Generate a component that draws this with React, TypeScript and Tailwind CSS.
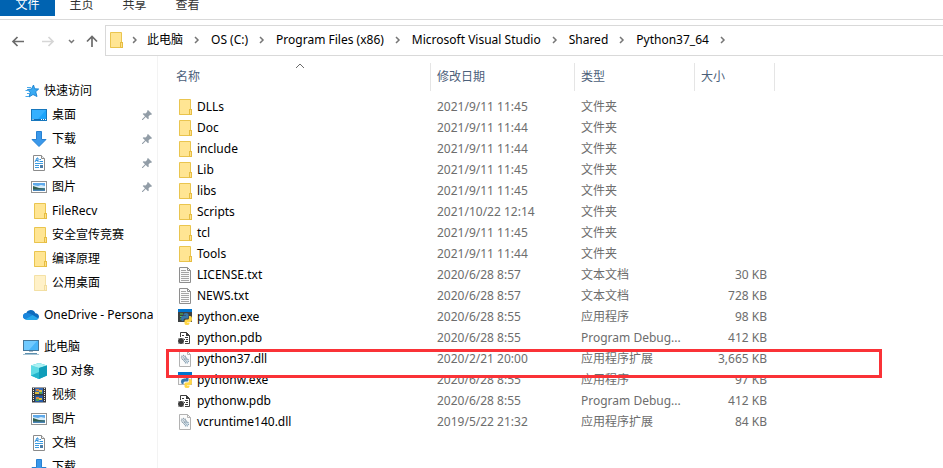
import { Fragment, type ReactNode } from "react";

type IconProps = { className?: string };

const FolderIcon = ({ className = "" }: IconProps) => (
  <svg width="16" height="16" viewBox="0 0 16 16" className={`shrink-0 ${className}`}>
    <path d="M3.5.5h11v10.500M3.500.5v15h12V11.500" fill="#ffe79b" stroke="#eac54f" />
    <path d="M4 1h10v10l-1 1v3H4z" fill="#ffe593" />
    <rect x="13.500" y="10.500" width="2" height="5" fill="#ffe08a" stroke="#e6bd42" />
    <path d="M3.500 15.500h10" stroke="#e9c34c" />
  </svg>
);

const StarIcon = () => (
  <svg width="16" height="16" viewBox="0 0 16 16" className="shrink-0">
    <path d="M10.500 2l1.200 3.800 4 .2-3 2.700L14 13.500l-4-2-4 2.500 1.200-4.500L4.500 6.500l4-.5z" fill="#3aaaf2" stroke="#1580d0" strokeWidth=".9" />
    <path d="M4 4.500h4M2.500 7.500h4M4 10.500h3M2.500 13.500h3.500" stroke="#4aa9ea" />
  </svg>
);

const DesktopIcon = () => (
  <svg width="16" height="16" viewBox="0 0 16 16" className="shrink-0">
    <rect x=".5" y="2.500" width="15" height="11" fill="#1ca4fb" stroke="#1777bd" />
    <path d="M1 3h14L7 12H1z" fill="#35b0ff" />
    <path d="M1 12.500h14" stroke="#0b6cb8" />
    <path d="M1.500 12.500h1M10 12.500h1M12 12.500h1M14 12.500h1" stroke="#fff" />
  </svg>
);

const DownloadIcon = () => (
  <svg width="16" height="16" viewBox="0 0 16 16" className="shrink-0">
    <path d="M5.500.5h5v8h4.500L8 15.500 1 8.500h4.500z" fill="#3a98ea" stroke="#2781d2" />
  </svg>
);

const DocumentIcon = () => (
  <svg width="16" height="16" viewBox="0 0 16 16" className="shrink-0">
    <path d="M2.500.5h8l3 3v12h-11z" fill="#fff" stroke="#8b8b8b" />
    <path d="M10.500.5v3h3" fill="#eee" stroke="#8b8b8b" />
    <path d="M4 7l2-4h1v4M5 5.500h2M8.500 4.500h1.500M8.500 6.500h3.500" fill="none" stroke="#2b8fdc" />
    <path d="M4 8.500h8M4 10.500h4M4 12.500h4" stroke="#3f9de0" />
    <path d="M9 10h3v3H9z" fill="#4d7ea8" />
  </svg>
);

const PictureIcon = () => (
  <svg width="16" height="16" viewBox="0 0 16 16" className="shrink-0">
    <rect x=".5" y="2.500" width="15" height="11" fill="#fff" stroke="#929292" />
    <rect x="2" y="4" width="12" height="8" fill="#5ea9ea" />
    <path d="M2 6l5 1 3-1 4 1v2H2z" fill="#d7ecf9" />
    <path d="M2 7l3 1 3 1 6 .500V11H2z" fill="#35604f" />
    <path d="M2 10.500h12V12H2z" fill="#4b86b8" />
  </svg>
);

const CloudIcon = () => (
  <svg width="16" height="16" viewBox="0 0 16 16" className="shrink-0">
    <path d="M4 12.500C1.500 12.500 0 11 0 9.200 0 7.300 1.500 6 3.300 6 4.200 3.800 6 3 7.800 3c2.400 0 4 1.500 4.500 3.300C14.500 6.300 16 7.700 16 9.600c0 1.800-1.300 3.400-3.500 3.400z" fill="#0f6cbd" />
    <path d="M3.300 6C1.500 6 0 7.300 0 9.200c0 1.300.7 2.400 2 3L9.500 8 6.800 6.500C5.700 5.900 4.300 5.800 3.300 6z" fill="#1a86dc" />
    <path d="M2 12.200L9.500 8l6 3.600c-.6.900-1.600 1.400-3 1.400H4.200c-.8 0-1.500-.2-2.200-.8z" fill="#28a8ea" />
  </svg>
);

const ComputerIcon = () => (
  <svg width="16" height="16" viewBox="0 0 16 16" className="shrink-0">
    <rect x=".5" y="1.500" width="15" height="10" fill="#48b5f8" stroke="#45789b" />
    <path d="M1 2h13L6 11H1z" fill="#70caff" />
    <path d="M6 12.500h4" stroke="#a8bdca" />
    <path d="M2 14.500h12" stroke="#5c8fae" />
    <path d="M0 15.500h16" stroke="#a6c3d4" />
  </svg>
);

const CubeIcon = () => (
  <svg width="16" height="16" viewBox="0 0 16 16" className="shrink-0">
    <path d="M8 0l8 2.500v10L8 16l-8-3.500v-10z" fill="#1ab3c9" />
    <path d="M0 2.500L8 5v11l-8-3.500z" fill="#5fdbe5" />
    <path d="M0 2.500L8 0l8 2.500L8 5z" fill="#aaf1f3" />
    <path d="M8 5l8-2.500v10L8 16z" fill="#109db9" />
    <path d="M0 12.500l8-3.500v7z" fill="#23b5cc" />
  </svg>
);

const VideoIcon = () => (
  <svg width="16" height="16" viewBox="0 0 16 16" className="shrink-0">
    <path d="M1 .5h14v15H1z" fill="#38383a" />
    <path d="M2.500 1v14M13.500 1v14" stroke="#e8e8e8" strokeDasharray="1 1" />
    <rect x="4" y="1" width="8" height="6" fill="#366bb5" />
    <rect x="4" y="8.500" width="8" height="6.500" fill="#2459a7" />
    <path d="M5 2h3v2H5zM5 10h3v2H5z" fill="#d9833f" />
    <path d="M8 3h3v2H8zM4 5h4v2H4zM8 11h3v2H8z" fill="#dbbe42" />
    <path d="M9 5h2v2H9zM5 12h3v2H5z" fill="#4fa253" />
  </svg>
);

const TextFileIcon = () => (
  <svg width="16" height="16" viewBox="0 0 16 16" className="shrink-0">
    <path d="M3.500.5h8l3 3v12h-11z" fill="#fafafa" stroke="#8e8e8e" />
    <path d="M11.500.5v3h3" fill="none" stroke="#8e8e8e" />
    <path d="M5 3.500h5M5 5.500h8M5 7.500h8M5 9.500h8M5 11.500h8M5 13.500h8" stroke="#a5a5a5" />
  </svg>
);

const PythonMark = () => (
  <>
    <path d="M7.500 5.500q0-1.500 2.500-1.500t2.500 1.500V8q0 1.500-1.500 1.500H9q-1.500 0-1.500 1.500v1H6.500Q5 12 5 9.500T6.500 7h3.500v-.5H7.500z" fill="#3777ab" />
    <path d="M13 7h1.200Q16 7 16 10t-1.800 3H11v.5h2.500v1Q13.500 16 11 16t-2.500-1.500V12q0-1.500 1.500-1.500h1.500Q13 10.500 13 9z" fill="#ffd748" />
  </>
);

const PythonExeIcon = () => (
  <svg width="16" height="16" viewBox="0 0 16 16" className="shrink-0">
    <rect x="2" y="1" width="14" height="12" fill="#3c4142" />
    <rect x="2" y="0" width="14" height="3" fill="#0074ce" />
    <path d="M4 5h3M4 7.500h2M4 10h1" stroke="#52c65a" />
    <PythonMark />
  </svg>
);

const PythonwExeIcon = () => (
  <svg width="16" height="16" viewBox="0 0 16 16" className="shrink-0">
    <rect x="2.500" y=".5" width="13" height="12" fill="#f5f5f5" stroke="#b4b4b4" />
    <rect x="2" y="0" width="14" height="3" fill="#0074ce" />
    <PythonMark />
  </svg>
);

const PdbIcon = () => (
  <svg width="16" height="16" viewBox="0 0 16 16" className="shrink-0">
    <path d="M4.500 7V2.500h6l3 3v8H9" fill="#fff" stroke="#3d3d3d" />
    <path d="M10 2v4h4z" fill="#3d3d3d" />
    <path d="M6 5.500h2M9 7.500h3M8 9.500h1M10 9.500h2M9 11.500h3" stroke="#3d3d3d" />
    <circle cx="5" cy="11" r="2.900" fill="#3d3d3d" />
    <path d="M2.500 8.500l5 5M7.500 8.500l-5 5M2 11h6" stroke="#3d3d3d" strokeWidth=".8" />
  </svg>
);

const DllIcon = () => (
  <svg width="16" height="16" viewBox="0 0 16 16" className="shrink-0">
    <path d="M3.500.5h8l3 3v12h-11z" fill="#fbfbfb" stroke="#b2b2b2" />
    <path d="M11.500.5v3h3" fill="none" stroke="#b2b2b2" />
    <circle cx="7.500" cy="6.500" r="2" fill="#e5edf2" stroke="#8b9ba7" strokeDasharray="1 .6" strokeWidth="1.300" />
    <circle cx="10.500" cy="10" r="2" fill="#dceaf3" stroke="#8ba5b8" strokeDasharray="1 .6" strokeWidth="1.300" />
    <path d="M7 6l4 5M6 8l4 4M9 5l3 4" stroke="#95a6b2" strokeWidth=".8" />
  </svg>
);

const PinIcon = () => (
  <svg width="10" height="10" viewBox="0 0 10 10" className="mr-[3px] shrink-0">
    <path d="M6 0l4 4-1 1-.800-.300L6.500 6.500l.3 2L6 9.300 3.700 7 .8 10H0v-.8l3-2.900L.7 4l.8-.8 2 .3 1.800-1.700L5 1z" fill="#929da7" />
  </svg>
);

const Crumb = ({ className = "w-7" }: IconProps) => (
  <svg height="10" viewBox="0 0 25 10" className={`shrink-0 ${className}`}>
    <path d="M10.500 2l3 3-3 3" fill="none" stroke="#767676" strokeWidth="1.500" />
  </svg>
);

const TABS = ["主页", "共享", "查看"];

const PATH = ["此电脑", "OS (C:)", "Program Files (x86)", "Microsoft Visual Studio", "Shared", "Python37_64"];

type NavItem = { label: string; icon: ReactNode; pinned?: boolean };

const QUICK_ACCESS: NavItem[] = [
  { label: "桌面", icon: <DesktopIcon />, pinned: true },
  { label: "下载", icon: <DownloadIcon />, pinned: true },
  { label: "文档", icon: <DocumentIcon />, pinned: true },
  { label: "图片", icon: <PictureIcon />, pinned: true },
  { label: "FileRecv", icon: <FolderIcon /> },
  { label: "安全宣传竞赛", icon: <FolderIcon /> },
  { label: "编译原理", icon: <FolderIcon /> },
  { label: "公用桌面", icon: <FolderIcon className="opacity-50" /> },
];

const THIS_PC: NavItem[] = [
  { label: "3D 对象", icon: <CubeIcon /> },
  { label: "视频", icon: <VideoIcon /> },
  { label: "图片", icon: <PictureIcon /> },
  { label: "文档", icon: <DocumentIcon /> },
  { label: "下载", icon: <DownloadIcon /> },
];

const TYPES = {
  folder: { label: "文件夹", icon: FolderIcon },
  txt: { label: "文本文档", icon: TextFileIcon },
  exe: { label: "应用程序", icon: PythonExeIcon },
  wexe: { label: "应用程序", icon: PythonwExeIcon },
  pdb: { label: "Program Debug...", icon: PdbIcon },
  dll: { label: "应用程序扩展", icon: DllIcon },
};

type FileRow = { name: string; date: string; type: keyof typeof TYPES; size?: string; marked?: boolean };

const FILES: FileRow[] = [
  { name: "DLLs", date: "2021/9/11 11:45", type: "folder" },
  { name: "Doc", date: "2021/9/11 11:44", type: "folder" },
  { name: "include", date: "2021/9/11 11:44", type: "folder" },
  { name: "Lib", date: "2021/9/11 11:45", type: "folder" },
  { name: "libs", date: "2021/9/11 11:45", type: "folder" },
  { name: "Scripts", date: "2021/10/22 12:14", type: "folder" },
  { name: "tcl", date: "2021/9/11 11:45", type: "folder" },
  { name: "Tools", date: "2021/9/11 11:44", type: "folder" },
  { name: "LICENSE.txt", date: "2020/6/28 8:57", type: "txt", size: "30 KB" },
  { name: "NEWS.txt", date: "2020/6/28 8:57", type: "txt", size: "728 KB" },
  { name: "python.exe", date: "2020/6/28 8:55", type: "exe", size: "98 KB" },
  { name: "python.pdb", date: "2020/6/28 8:55", type: "pdb", size: "412 KB" },
  { name: "python37.dll", date: "2020/2/21 20:00", type: "dll", size: "3,665 KB", marked: true },
  { name: "pythonw.exe", date: "2020/6/28 8:55", type: "wexe", size: "97 KB" },
  { name: "pythonw.pdb", date: "2020/6/28 8:55", type: "pdb", size: "412 KB" },
  { name: "vcruntime140.dll", date: "2019/5/22 21:32", type: "dll", size: "84 KB" },
];

function NavRow({ item, indent = "pl-[31px]" }: { item: NavItem; indent?: string }) {
  return (
    <a href="#" className={`flex h-6 items-center gap-[5px] pr-[2px] ${indent}`}>
      {item.icon}
      <span className="flex-1 overflow-hidden whitespace-nowrap">{item.label}</span>
      {item.pinned && <PinIcon />}
    </a>
  );
}

function AddressBar() {
  return (
    <div className="flex h-9 items-center pl-[10px] pt-[5px]">
      <button aria-label="返回" className="mr-[14px]">
        <svg width="16" height="16" viewBox="0 0 16 16">
          <path d="M14 8.500H3M7.500 4L3 8.500 7.500 13" fill="none" stroke="#6b6b6b" strokeWidth="1.700" />
        </svg>
      </button>
      <button aria-label="前进" className="mr-2">
        <svg width="16" height="16" viewBox="0 0 16 16">
          <path d="M2 8.500h11M8.500 4L13 8.500 8.500 13" fill="none" stroke="#d6d6d6" strokeWidth="1.700" />
        </svg>
      </button>
      <button aria-label="最近浏览的位置" className="mr-1">
        <svg width="16" height="16" viewBox="0 0 16 16">
          <path d="M5 7l2.500 2.500L10 7" fill="none" stroke="#767676" strokeWidth="1.500" />
        </svg>
      </button>
      <button aria-label="上移" className="mr-[5px]">
        <svg width="16" height="16" viewBox="0 0 16 16">
          <path d="M8 14V3.500M3 8.500l5-5 5 5" fill="none" stroke="#6b6b6b" strokeWidth="1.700" />
        </svg>
      </button>
      <nav className="flex h-[31px] flex-1 items-center overflow-hidden border border-r-0 border-[#d9d9d9] pb-[2px] pl-px">
        <FolderIcon />
        <Crumb className="w-6" />
        {PATH.map((part) => (
          <Fragment key={part}>
            <a href="#" className="whitespace-nowrap">{part}</a>
            <Crumb />
          </Fragment>
        ))}
      </nav>
    </div>
  );
}

function Sidebar() {
  return (
    <aside className="w-[158px] shrink-0 border-r border-[#f3f3f3] pt-[23px]">
      <NavRow item={{ label: "快速访问", icon: <StarIcon /> }} indent="pl-[23px]" />
      {QUICK_ACCESS.map((item) => (
        <NavRow key={item.label} item={item} />
      ))}
      <div className="py-2">
        <NavRow item={{ label: "OneDrive - Persona", icon: <CloudIcon /> }} indent="pl-[23px]" />
      </div>
      <NavRow item={{ label: "此电脑", icon: <ComputerIcon /> }} indent="pl-[23px]" />
      {THIS_PC.map((item) => (
        <NavRow key={item.label} item={item} />
      ))}
    </aside>
  );
}

function FileTable() {
  return (
    <main className="flex-1 pl-3 pt-[7px]">
      <table className="w-[605px] table-fixed border-separate border-spacing-0 text-left text-[#6d6d6d]">
        <thead>
          <tr className="h-7 text-[#4c607a]">
            <th className="relative w-[261px] border-r border-[#e5e5e5] p-0 pl-[6px] font-normal">
              <button>名称</button>
              <svg width="10" height="6" viewBox="0 0 10 6" className="absolute left-1/2 top-0 -translate-x-1/2">
                <path d="M1 5l4-4 4 4" fill="none" stroke="#6b6b6b" />
              </svg>
            </th>
            <th className="w-[144px] border-r border-[#e5e5e5] p-0 pl-[6px] font-normal"><button>修改日期</button></th>
            <th className="w-[120px] border-r border-[#e5e5e5] p-0 pl-[6px] font-normal"><button>类型</button></th>
            <th className="w-[80px] border-r border-[#e5e5e5] p-0 pl-[6px] font-normal"><button>大小</button></th>
          </tr>
        </thead>
        <tbody className="before:block before:h-[5px]">
          {FILES.map((file) => {
            const type = TYPES[file.type];
            return (
              <tr key={file.name} className="h-[21px]">
                <td className="relative p-0 pl-[6px]">
                  <div className="flex items-center gap-[5px] text-black">
                    <type.icon />
                    {file.name}
                  </div>
                  {/* red highlight frame */}
                  {file.marked && (
                    <div className="absolute -left-1 top-px z-10 h-[29px] w-[716px] border-3 border-[#fa3237]" />
                  )}
                </td>
                <td className="p-0 pl-[6px]">{file.date}</td>
                <td className="whitespace-nowrap p-0 pl-[6px]">{type.label}</td>
                <td className="p-0 pr-2 text-right">{file.size}</td>
              </tr>
            );
          })}
        </tbody>
      </table>
    </main>
  );
}

export default function App() {
  return (
    <div className="flex h-screen flex-col overflow-hidden bg-white font-['Noto_Sans','Noto_Sans_CJK_SC',sans-serif] text-[12px] leading-5 text-black">
      <header className="flex h-5 shrink-0 items-start border-b border-[#d9d9d9] leading-[10px] text-[#333]">
        <button className="h-4 w-[55px] bg-[#0063b1] pb-[6px] text-white">文件</button>
        {TABS.map((tab) => (
          <button key={tab} className="h-4 w-[53px] pb-[6px]">{tab}</button>
        ))}
      </header>
      <AddressBar />
      <div className="flex min-h-0 flex-1">
        <Sidebar />
        <FileTable />
      </div>
    </div>
  );
}
